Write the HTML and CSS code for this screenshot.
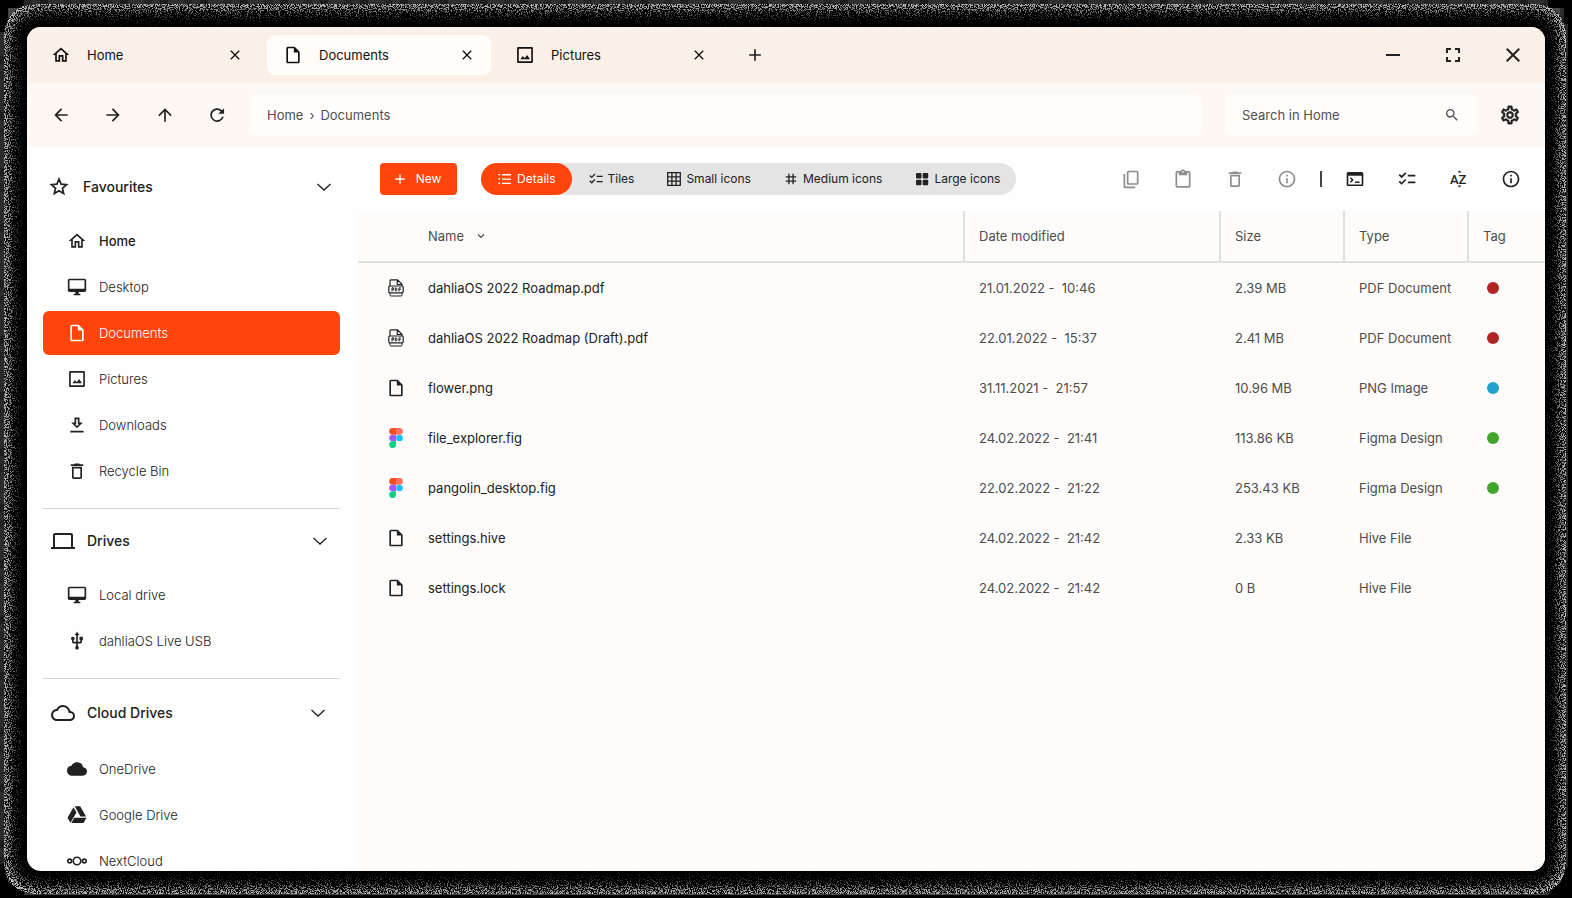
FILE: index.html
```
<!DOCTYPE html>
<html lang="en">
<head>
<meta charset="utf-8">
<title>Files</title>
<link rel="stylesheet" href="styles.css">
</head>
<body>
<svg class="defs" aria-hidden="true">
  <filter id="grain" x="0" y="0" width="100%" height="100%" color-interpolation-filters="sRGB">
    <feTurbulence type="fractalNoise" baseFrequency="0.9" numOctaves="2" seed="4"/>
    <feColorMatrix values="0 0 0 0 1  0 0 0 0 1  0 0 0 0 1  1.5 0 0 0 -0.25" result="noise"/>
    <feComposite in="SourceAlpha" in2="noise" operator="arithmetic" k2="0.4" k3="1" k4="0" result="sum"/>
    <feColorMatrix in="sum" values="0 0 0 0 1  0 0 0 0 1  0 0 0 0 1  0 0 0 6 -4.200" result="dots"/>
    <feComposite in="dots" in2="SourceAlpha" operator="in"/>
  </filter>
  <symbol id="home" viewBox="0 0 24 24"><path d="M12 5.690l5 4.500V18h-2v-6H9v6H7v-7.810l5-4.500M12 3L2 12h3v8h6v-6h2v6h6v-8h3L12 3z"/></symbol>
  <symbol id="file" viewBox="0 0 24 24"><path d="M14 2H6c-1.100 0-2 .9-2 2v16c0 1.100.9 2 2 2h12c1.100 0 2-.9 2-2V8l-6-6zM6 20V4h7v5h5v11H6z"/></symbol>
  <symbol id="image" viewBox="0 0 24 24"><path d="M19.500 4v15.500h-15V4.500h15M20 2.500H4c-.8 0-1.500.7-1.500 1.500v16c0 .8.7 1.500 1.500 1.500h16c.8 0 1.500-.7 1.500-1.500V4c0-.8-.7-1.500-1.500-1.500zM14.600 11.900l-3 3.900L9.500 13.200 6.500 17h11.500l-3.400-5.100z"/></symbol>
  <symbol id="close" viewBox="0 0 24 24"><path d="M19 6.410L17.590 5 12 10.590 6.410 5 5 6.410 10.590 12 5 17.590 6.410 19 12 13.410 17.590 19 19 17.590 13.410 12z"/></symbol>
  <symbol id="plus" viewBox="0 0 24 24"><path d="M19 13h-6v6h-2v-6H5v-2h6V5h2v6h6v2z"/></symbol>
  <symbol id="minus" viewBox="0 0 24 24"><path d="M5 11h14v2H5z"/></symbol>
  <symbol id="full" viewBox="0 0 24 24"><path d="M7 14H5v5h5v-2H7v-3zM5 10h2V7h3V5H5v5zM17 17h-3v2h5v-5h-2v3zM14 5v2h3v3h2V5h-5z"/></symbol>
  <symbol id="back" viewBox="0 0 24 24"><path d="M20 11H7.830l5.590-5.590L12 4l-8 8 8 8 1.410-1.410L7.830 13H20v-2z"/></symbol>
  <symbol id="forward" viewBox="0 0 24 24"><path d="M12 4l-1.410 1.410L16.170 11H4v2h12.170l-5.580 5.590L12 20l8-8z"/></symbol>
  <symbol id="up" viewBox="0 0 24 24"><path d="M4 12l1.410 1.410L11 7.830V20h2V7.830l5.580 5.590L20 12l-8-8-8 8z"/></symbol>
  <symbol id="refresh" viewBox="0 0 24 24"><path d="M18 6.300A8.200 8.200 0 1 0 20.100 14h-2.200A6.100 6.100 0 1 1 16.300 7.800L13.500 10.500H20.500V3.800z"/></symbol>
  <symbol id="search" viewBox="0 0 24 24"><path d="M15.500 14h-.79l-.28-.27A6.471 6.471 0 0 0 16 9.500 6.500 6.500 0 1 0 9.500 16c1.610 0 3.090-.59 4.230-1.570l.27.28v.79l5 4.990L20.490 19l-4.990-5zm-6 0C7.010 14 5 11.990 5 9.500S7.010 5 9.500 5 14 7.010 14 9.500 11.990 14 9.500 14z"/></symbol>
  <symbol id="gear" viewBox="0 0 24 24"><path stroke="currentColor" stroke-width=".4" d="M19.430 12.980c.04-.32.07-.64.07-.98s-.03-.66-.07-.98l2.110-1.650c.19-.15.24-.42.12-.64l-2-3.460c-.12-.22-.39-.3-.61-.22l-2.490 1c-.52-.4-1.080-.73-1.690-.98l-.38-2.650C14.460 2.180 14.250 2 14 2h-4c-.25 0-.46.18-.49.42l-.38 2.650c-.61.25-1.170.59-1.690.98l-2.490-1c-.23-.09-.49 0-.61.22l-2 3.460c-.13.22-.07.49.12.64l2.110 1.650c-.04.32-.07.65-.07.98s.03.66.07.98l-2.110 1.650c-.19.15-.24.42-.12.64l2 3.460c.12.22.39.3.61.22l2.490-1c.52.4 1.080.73 1.690.98l.38 2.650c.03.24.24.42.49.42h4c.25 0 .46-.18.49-.42l.38-2.650c.61-.25 1.170-.59 1.690-.98l2.490 1c.23.09.49 0 .61-.22l2-3.460c.12-.22.07-.49-.12-.64l-2.110-1.650zm-1.980-1.710c.04.31.05.52.05.73s-.02.43-.05.73l-.14 1.130.89.700 1.080.84-.7 1.210-1.270-.51-1.040-.42-.9.68c-.43.32-.84.56-1.250.73l-1.060.43-.16 1.130-.2 1.350h-1.400l-.19-1.350-.16-1.130-1.060-.43c-.43-.18-.83-.41-1.230-.71l-.91-.7-1.060.43-1.270.51-.7-1.210 1.080-.84.890-.7-.14-1.130c-.03-.31-.05-.54-.05-.74s.02-.43.050-.73l.14-1.130-.89-.7-1.080-.84.700-1.210 1.270.51 1.040.42.900-.68c.43-.32.84-.56 1.250-.73l1.060-.43.160-1.130.200-1.350h1.390l.19 1.350.160 1.130 1.060.43c.43.180.83.410 1.230.71l.91.700 1.060-.43 1.270-.51.700 1.210-1.070.85-.89.700.14 1.130zM12 8c-2.210 0-4 1.790-4 4s1.790 4 4 4 4-1.790 4-4-1.790-4-4-4zm0 6c-1.100 0-2-.9-2-2s.9-2 2-2 2 .9 2 2-.9 2-2 2z"/></symbol>
  <symbol id="star" viewBox="0 0 24 24"><path d="M12 4.200l2.150 5 5.350.5-4.050 3.600 1.200 5.300L12 15.800l-4.650 2.800 1.200-5.300L4.500 9.700l5.350-.5z" fill="none" stroke="currentColor" stroke-width="1.700"/></symbol>
  <symbol id="chevron" viewBox="0 0 20 20"><path d="M3.500 7l6.500 6 6.500-6" fill="none" stroke="currentColor" stroke-width="1.300"/></symbol>
  <symbol id="caret" viewBox="0 0 12 12"><path d="M3 4.500l3 3 3-3" fill="none" stroke="currentColor" stroke-width="1.200"/></symbol>
  <symbol id="desktop" viewBox="0 0 24 24"><path d="M21 2H3c-1.100 0-2 .9-2 2v12c0 1.100.9 2 2 2h7v2H8v2h8v-2h-2v-2h7c1.100 0 2-.9 2-2V4c0-1.100-.9-2-2-2zm0 12H3V4h18v10z"/></symbol>
  <symbol id="download" viewBox="0 0 24 24"><path d="M19 9h-4V3H9v6H5l7 7 7-7zM13 11v-6h-2v6H9.830L12 13.170 14.170 11H13zM4 19h16v2H4z" fill-rule="evenodd"/></symbol>
  <symbol id="trash" viewBox="0 0 24 24"><path d="M6 19.500c0 1.100.9 2 2 2h8c1.100 0 2-.9 2-2V7H6v12.500zM8 9h8v10.500H8V9zM15.500 4l-1-1h-5l-1 1H4.500v2h15V4z"/></symbol>
  <symbol id="laptop" viewBox="0 0 24 24"><path d="M4 4h16c1.100 0 2 .9 2 2v12h2v2H0v-2h2V6c0-1.100.9-2 2-2zM4 6v12h16V6z" fill-rule="evenodd"/></symbol>
  <symbol id="usb" viewBox="0 0 24 24"><path d="M15 7v4h1v2h-3V5h2l-3-4-3 4h2v8H8v-2.070c.7-.37 1.200-1.080 1.200-1.930 0-1.210-.99-2.200-2.200-2.200S4.800 7.790 4.800 9c0 .85.5 1.560 1.200 1.930V13c0 1.110.89 2 2 2h3v3.050c-.71.37-1.200 1.100-1.200 1.950a2.200 2.200 0 0 0 4.400 0c0-.85-.49-1.580-1.200-1.950V15h3c1.110 0 2-.89 2-2v-2h1V7h-4z"/></symbol>
  <symbol id="cloud" viewBox="0 0 24 24"><path d="M19.350 10.040A7.490 7.490 0 0 0 12 4C9.110 4 6.600 5.640 5.350 8.040A5.994 5.994 0 0 0 0 14c0 3.310 2.690 6 6 6h13c2.760 0 5-2.240 5-5 0-2.640-2.050-4.780-4.650-4.960zM19 18H6c-2.210 0-4-1.790-4-4 0-2.050 1.530-3.760 3.560-3.970l1.070-.11.500-.95A5.469 5.469 0 0 1 12 6c2.620 0 4.880 1.860 5.390 4.430l.3 1.500 1.530.11A2.980 2.980 0 0 1 22 15c0 1.650-1.350 3-3 3z"/></symbol>
  <symbol id="cloud-fill" viewBox="0 0 24 24"><path d="M19.350 10.040A7.490 7.490 0 0 0 12 4C9.110 4 6.600 5.640 5.350 8.040A5.994 5.994 0 0 0 0 14c0 3.310 2.690 6 6 6h13c2.760 0 5-2.240 5-5 0-2.640-2.050-4.780-4.650-4.960z"/></symbol>
  <symbol id="gdrive" viewBox="0 0 24 24"><path d="M7.800 2.700L.6 15.200l3.500 6.200L11.400 8.900zM9.300 1.600h6.500l7.100 12.200h-6.800zM8.700 15.300h14.600l-3.400 6.200H5.200z"/></symbol>
  <symbol id="nextcloud" viewBox="0 0 24 24"><g fill="none" stroke="currentColor" stroke-width="2"><circle cx="12" cy="12" r="4.500"/><circle cx="3.200" cy="12" r="2.300"/><circle cx="20.800" cy="12" r="2.300"/></g></symbol>
  <symbol id="list" viewBox="0 0 16 16"><path d="M1.500 3h1.600v1.500H1.500zM1.500 7.300h1.600v1.500H1.500zM1.500 11.600h1.600v1.500H1.500zM5 3.100h9v1.300H5zM5 7.400h9v1.300H5zM5 11.700h9V13H5z"/></symbol>
  <symbol id="checks" viewBox="0 0 24 24"><path d="M22 7h-9v2h9V7zM22 15h-9v2h9v-2zM5.540 11L2 7.460l1.410-1.410 2.120 2.120 4.240-4.240 1.410 1.410L5.540 11zM5.540 19L2 15.460l1.410-1.410 2.120 2.120 4.240-4.240 1.410 1.410L5.540 19z"/></symbol>
  <symbol id="grid" viewBox="0 0 16 16"><path d="M1.700 1.700h12.600v12.600H1.700zM5.900 1.700v12.600M10.100 1.700v12.600M1.700 5.900h12.600M1.700 10.100h12.600" fill="none" stroke="currentColor" stroke-width="1.300"/></symbol>
  <symbol id="hash" viewBox="0 0 16 16"><path d="M5.900 2.800v10.400M10.100 2.800v10.400M2.800 5.900h10.400M2.800 10.100h10.400" fill="none" stroke="currentColor" stroke-width="1.300"/></symbol>
  <symbol id="tiles" viewBox="0 0 16 16"><rect x="2" y="2" width="5.500" height="5.500" rx="1"/><rect x="8.700" y="2" width="5.500" height="5.500" rx="1"/><rect x="2" y="8.700" width="5.500" height="5.500" rx="1"/><rect x="8.700" y="8.700" width="5.500" height="5.500" rx="1"/></symbol>
  <symbol id="copy" viewBox="0 0 24 24"><path d="M19 2H9c-1.100 0-2 .9-2 2v13c0 1.100.9 2 2 2h10c1.100 0 2-.9 2-2V4c0-1.100-.9-2-2-2zm0 15H9V4h10v13zM3 6v15c0 1.100.9 2 2 2h12v-2H5V6z"/></symbol>
  <symbol id="paste" viewBox="0 0 24 24"><path d="M19 2.500h-4.200C14.400 1.300 13.300.5 12 .5s-2.400.8-2.800 2H5c-1.100 0-2 .9-2 2v16c0 1.100.9 2 2 2h14c1.100 0 2-.9 2-2v-16c0-1.100-.9-2-2-2zM12 2.500c.6 0 1 .4 1 1s-.4 1-1 1-1-.4-1-1 .4-1 1-1zM19 20.500H5v-16h2v3h10v-3h2z" fill-rule="evenodd"/></symbol>
  <symbol id="info" viewBox="0 0 24 24"><path d="M11 7h2v2h-2zm0 4h2v6h-2zm1-9C6.480 2 2 6.480 2 12s4.480 10 10 10 10-4.480 10-10S17.520 2 12 2zm0 18c-4.410 0-8-3.590-8-8s3.590-8 8-8 8 3.590 8 8-3.590 8-8 8z"/></symbol>
  <symbol id="terminal" viewBox="0 0 24 24"><path d="M20 3.500H4c-1.100 0-2 .9-2 2v13c0 1.100.9 2 2 2h16c1.100 0 2-.9 2-2v-13c0-1.100-.9-2-2-2zm0 15H4V8h16v10.500zM12 15h5.500v1.700H12zM7 9.800l3.500 3.300L7 16.400l-1.200-1.200 2.200-2.100-2.200-2.100z"/></symbol>
  <symbol id="pdf" viewBox="0 0 20 20"><g fill="none" stroke="currentColor" stroke-width="1.200"><path d="M4 8V2.800c0-.6.400-1 1-1h6.500L16 6.300V8M11.300 2v4.500H16"/><rect x="2.800" y="8" width="14.400" height="6.800" rx="1"/><path d="M4 15v2c0 .6.400 1 1 1h10c.6 0 1-.4 1-1v-2M6 13.400v-3.600h1.600v2H6M9.300 9.900v3h.8c1.300 0 1.300-3 0-3zM13 13.400v-3.500h2M13 11.600h1.700" stroke-width="1"/></g></symbol>
  <symbol id="figma" viewBox="0 0 14 20"><path d="M3.500 0H7v6.700H3.500a3.350 3.350 0 0 1 0-6.700z" fill="#f24e1e"/><path d="M7 0h3.500a3.350 3.350 0 0 1 0 6.700H7z" fill="#ff7262"/><path d="M3.500 6.700H7v6.600H3.500a3.300 3.300 0 0 1 0-6.600z" fill="#a259ff"/><circle cx="10.500" cy="10" r="3.300" fill="#1abcfe"/><path d="M3.500 13.300H7v3.300a3.400 3.400 0 1 1-3.500-3.300z" fill="#0acf83"/></symbol>
</svg>
<div class="rim"></div>
<div class="grain"></div>

<div class="window">
  <header class="titlebar">
    <div class="tab"><svg class="i20"><use href="#home"/></svg><span>Home</span><button aria-label="Close Home"><svg class="i16"><use href="#close"/></svg></button></div>
    <div class="tab active"><svg class="i20"><use href="#file"/></svg><span>Documents</span><button aria-label="Close Documents"><svg class="i16"><use href="#close"/></svg></button></div>
    <div class="tab"><svg class="i20"><use href="#image"/></svg><span>Pictures</span><button aria-label="Close Pictures"><svg class="i16"><use href="#close"/></svg></button></div>
    <button class="square" aria-label="New tab"><svg class="i20"><use href="#plus"/></svg></button>
    <div class="controls">
      <button class="square" aria-label="Minimise"><svg class="i24"><use href="#minus"/></svg></button>
      <button class="square" aria-label="Maximise"><svg class="i24"><use href="#full"/></svg></button>
      <button class="square" aria-label="Close window"><svg class="i24"><use href="#close"/></svg></button>
    </div>
  </header>

  <div class="navbar">
    <div class="history">
      <button aria-label="Back"><svg class="i20"><use href="#back"/></svg></button>
      <button aria-label="Forward"><svg class="i20"><use href="#forward"/></svg></button>
      <button aria-label="Up"><svg class="i20"><use href="#up"/></svg></button>
      <button aria-label="Refresh"><svg class="i20"><use href="#refresh"/></svg></button>
    </div>
    <nav class="address" aria-label="Path"><a href="#">Home</a><span>›</span><a href="#">Documents</a></nav>
    <label class="search"><input type="text" aria-label="Search" placeholder="Search in Home"><svg class="i16"><use href="#search"/></svg></label>
    <button class="settings" aria-label="Settings"><svg class="i22"><use href="#gear"/></svg></button>
  </div>

  <div class="body">
    <aside class="sidebar">
      <section>
        <button class="heading fav"><svg class="i24"><use href="#star"/></svg><span>Favourites</span><svg class="i20"><use href="#chevron"/></svg></button>
        <div class="links">
          <a class="strong" href="#"><svg class="i20"><use href="#home"/></svg>Home</a>
          <a href="#"><svg class="i20"><use href="#desktop"/></svg>Desktop</a>
          <a class="current" href="#"><svg class="i20"><use href="#file"/></svg>Documents</a>
          <a href="#"><svg class="i20"><use href="#image"/></svg>Pictures</a>
          <a href="#"><svg class="i20"><use href="#download"/></svg>Downloads</a>
          <a href="#"><svg class="i20"><use href="#trash"/></svg>Recycle Bin</a>
        </div>
      </section>
      <section>
        <button class="heading"><svg class="i24"><use href="#laptop"/></svg><span>Drives</span><svg class="i20"><use href="#chevron"/></svg></button>
        <div class="links">
          <a href="#"><svg class="i20"><use href="#desktop"/></svg>Local drive</a>
          <a href="#"><svg class="i20"><use href="#usb"/></svg>dahliaOS Live USB</a>
        </div>
      </section>
      <section>
        <button class="heading tall"><svg class="i24"><use href="#cloud"/></svg><span>Cloud Drives</span><svg class="i20"><use href="#chevron"/></svg></button>
        <div class="links">
          <a href="#"><svg class="i20"><use href="#cloud-fill"/></svg>OneDrive</a>
          <a href="#"><svg class="i20"><use href="#gdrive"/></svg>Google Drive</a>
          <a href="#"><svg class="i20"><use href="#nextcloud"/></svg>NextCloud</a>
        </div>
      </section>
    </aside>

    <main>
      <div class="actions">
        <button class="new"><svg class="i16"><use href="#plus"/></svg>New</button>
        <div class="views">
          <button class="on"><svg class="i16"><use href="#list"/></svg>Details</button>
          <button><svg class="i16"><use href="#checks"/></svg>Tiles</button>
          <button><svg class="i16"><use href="#grid"/></svg>Small icons</button>
          <button><svg class="i16"><use href="#hash"/></svg>Medium icons</button>
          <button><svg class="i16"><use href="#tiles"/></svg>Large icons</button>
        </div>
        <div class="tools">
          <div class="group">
            <button disabled aria-label="Copy"><svg class="i20"><use href="#copy"/></svg></button>
            <button disabled aria-label="Paste"><svg class="i20"><use href="#paste"/></svg></button>
            <button disabled aria-label="Delete"><svg class="i20"><use href="#trash"/></svg></button>
            <button disabled aria-label="File info"><svg class="i20"><use href="#info"/></svg></button>
          </div>
          <span class="bar"></span>
          <div class="group">
            <button aria-label="Terminal"><svg class="i20"><use href="#terminal"/></svg></button>
            <button aria-label="Select"><svg class="i20"><use href="#checks"/></svg></button>
            <button aria-label="Sort"><svg class="i20 az" viewBox="0 0 20 20"><text x="1" y="15">AZ</text><path d="M8.500 3.500L10.500 1.500l2 2zM8.500 16.500l2 2 2-2z"/></svg></button>
            <button aria-label="Info"><svg class="i20"><use href="#info"/></svg></button>
          </div>
        </div>
      </div>

      <table>
        <colgroup><col><col class="c-date"><col class="c-size"><col class="c-size"><col class="c-tag"></colgroup>
        <thead>
          <tr><th class="name"><div class="sort">Name <svg class="i12"><use href="#caret"/></svg></div></th><th>Date modified</th><th>Size</th><th>Type</th><th>Tag</th></tr>
        </thead>
        <tbody>
          <tr><td><div class="cell"><svg class="i20"><use href="#pdf"/></svg>dahliaOS 2022 Roadmap.pdf</div></td><td>21.01.2022 -  10:46</td><td>2.39 MB</td><td>PDF Document</td><td><span class="dot red"></span></td></tr>
          <tr><td><div class="cell"><svg class="i20"><use href="#pdf"/></svg>dahliaOS 2022 Roadmap (Draft).pdf</div></td><td>22.01.2022 -  15:37</td><td>2.41 MB</td><td>PDF Document</td><td><span class="dot red"></span></td></tr>
          <tr><td><div class="cell"><svg class="i20"><use href="#file"/></svg>flower.png</div></td><td>31.11.2021 -  21:57</td><td>10.96 MB</td><td>PNG Image</td><td><span class="dot blue"></span></td></tr>
          <tr><td><div class="cell"><svg class="i20"><use href="#figma"/></svg>file_explorer.fig</div></td><td>24.02.2022 -  21:41</td><td>113.86 KB</td><td>Figma Design</td><td><span class="dot green"></span></td></tr>
          <tr><td><div class="cell"><svg class="i20"><use href="#figma"/></svg>pangolin_desktop.fig</div></td><td>22.02.2022 -  21:22</td><td>253.43 KB</td><td>Figma Design</td><td><span class="dot green"></span></td></tr>
          <tr><td><div class="cell"><svg class="i20"><use href="#file"/></svg>settings.hive</div></td><td>24.02.2022 -  21:42</td><td>2.33 KB</td><td>Hive File</td><td></td></tr>
          <tr><td><div class="cell"><svg class="i20"><use href="#file"/></svg>settings.lock</div></td><td>24.02.2022 -  21:42</td><td>0 B</td><td>Hive File</td><td></td></tr>
        </tbody>
      </table>
    </main>
  </div>
</div>
</body>
</html>
```
FILE: styles.css
```
* { box-sizing: border-box; }
body {
  margin: 0;
  height: 100vh;
  padding: 27px;
  overflow: hidden;
  background: #000;
  color: #212121;
  font: 13px/20px Inter, "Noto Sans", sans-serif;
}
button { border: 0; padding: 0; margin: 0; background: none; color: inherit; font: inherit; display: flex; align-items: center; justify-content: center; }
a { color: inherit; text-decoration: none; }
svg { flex: none; display: block; fill: currentColor; }
.defs { position: absolute; width: 0; height: 0; }
.i12 { width: 12px; height: 12px; }
.i16 { width: 16px; height: 16px; }
.i20 { width: 20px; height: 20px; }
.i22 { width: 22px; height: 22px; }
.i24 { width: 24px; height: 24px; }
.az text { font: 500 13px Roboto, sans-serif; }

/* Window shadow: blocky rim with a dithered glow inside it */
.rim {
  position: absolute;
  inset: 0;
  background:
    repeating-linear-gradient(90deg, #0006 0 8px, #0000 8px 24px, #0003 24px 32px, #0000 32px 40px),
    repeating-linear-gradient(#0005 0 8px, #0000 8px 16px, #0003 16px 24px, #0000 24px 56px),
    #484848;
  clip-path: polygon(24px 0, calc(100% - 24px) 0, calc(100% - 24px) 8px, calc(100% - 8px) 8px, calc(100% - 8px) 24px, calc(100% - 4px) 24px, calc(100% - 4px) calc(100% - 32px), calc(100% - 16px) calc(100% - 16px), calc(100% - 24px) calc(100% - 3px), 24px calc(100% - 3px), 24px calc(100% - 10px), 8px calc(100% - 16px), 8px calc(100% - 34px), 0 calc(100% - 34px), 0 32px, 8px 32px, 8px 8px, 24px 8px);
}
.grain {
  position: absolute;
  inset: 4px 6px 4px 4px;
  border-radius: 30px;
  background: #000;
}
.grain::after {
  content: "";
  position: absolute;
  inset: 0;
  border-radius: 30px;
  box-shadow: inset 0 0 20px 7px #fff;
  filter: url(#grain);
}

.window {
  position: relative;
  height: 100%;
  display: flex;
  flex-direction: column;
  overflow: hidden;
  border-radius: 14px;
  background: #fefefe;
}

.titlebar { flex: none; height: 56px; padding: 0 8px; display: flex; align-items: center; gap: 8px; background: #fbf0e7; }
.tab { width: 224px; height: 40px; padding: 0 16px; display: flex; align-items: center; gap: 16px; border-radius: 8px; color: #111; }
.tab span { flex: 1; }
.active { background: #fffcf9; }
.square { width: 48px; height: 40px; }
.controls { margin-left: auto; display: flex; gap: 12px; }

.navbar { flex: none; height: 64px; padding: 0 17px 0 16px; display: flex; align-items: center; background: #fef8f5; }
.history { display: flex; gap: 16px; }
.history button, .settings { width: 36px; height: 40px; }
.address, .search { height: 42px; padding: 0 16px; display: flex; align-items: center; border-radius: 8px; background: #fffdfc; color: #505050; }
.address { flex: 1; margin: 0 24px 0 16px; gap: 6px; }
.search { width: 250px; }
.search input { flex: 1; min-width: 0; border: 0; padding: 0; outline: 0; background: none; font: inherit; color: inherit; }
.search input::placeholder { color: #505050; opacity: 1; }
.settings { margin-left: 16px; }

.body { flex: 1; min-height: 0; display: flex; }
.sidebar { flex: none; width: 331px; padding: 16px 18px 0 16px; overflow: hidden; }
.sidebar section + section { margin-top: 15px; padding-top: 8px; border-top: 1px solid #d6d6d6; }
.heading { width: 100%; height: 48px; margin-bottom: 8px; padding: 0 10px 0 8px; gap: 12px; font-size: 14px; font-weight: 500; text-align: left; }
.heading span { flex: 1; }
.fav { padding: 0 6px 0 4px; }
.tall { height: 52px; padding-right: 12px; }
.links { display: flex; flex-direction: column; gap: 2px; }
.links a { height: 44px; padding-left: 24px; display: flex; align-items: center; gap: 12px; border-radius: 6px; font-weight: 300; }
.links .strong { font-weight: 500; }
.links .current { background: #ff450c; color: #fff; }

main { flex: 1; min-width: 0; background: #fefcfb; }
.actions { height: 64px; padding: 0 24px 0 22px; display: flex; align-items: center; background: #fefefe; }
.new, .views button { height: 32px; font-size: 12px; }
.new { width: 77px; padding-right: 4px; gap: 8px; border-radius: 4px; background: #ff450c; color: #fff; }
.views { margin-left: 24px; display: flex; border-radius: 16px; background: #e4e4e4; }
.views button { padding: 0 16px; gap: 4px; border-radius: 16px; }
.views .on { background: #ff450c; color: #fff; }
.tools { margin-left: auto; display: flex; align-items: center; gap: 23px; }
.group { display: flex; gap: 32px; }
.tools button:disabled { color: #8d8d8d; }
.bar { width: 2px; height: 16px; background: #424242; }

table { width: 100%; table-layout: fixed; border-collapse: separate; border-spacing: 0; }
.c-date { width: 256px; }
.c-size { width: 124px; }
.c-tag { width: 78px; }
th, td { padding: 0 0 0 16px; text-align: left; color: #4c4c4c; font-weight: 400; white-space: pre; }
th { height: 52px; padding-left: 14px; border-left: 2px solid #dfdfdd; border-bottom: 2px solid #dfdfdd; }
td { height: 50px; }
th.name { padding-left: 70px; border-left: 0; }
.sort { display: flex; align-items: center; gap: 7px; }
.cell { display: flex; align-items: center; gap: 22px; padding-left: 12px; color: #212121; }
.dot { display: block; width: 12px; height: 12px; margin-left: 4px; border-radius: 50%; }
.red { background: #b02424; }
.blue { background: #24a2cf; }
.green { background: #43a52e; }
```
